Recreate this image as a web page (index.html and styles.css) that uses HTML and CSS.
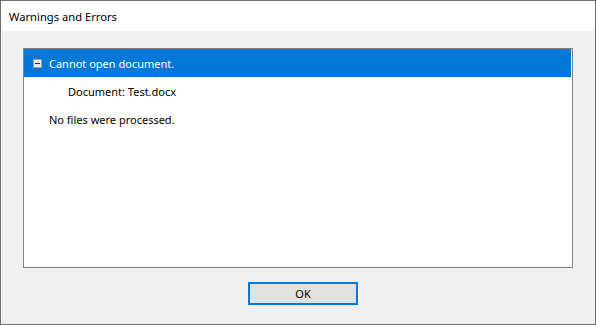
FILE: index.html
```html
<!DOCTYPE html>
<html>
<head>
<meta charset="utf-8">
<link rel="stylesheet" href="styles.css">
</head>
<body>
<div class="window">
  <div class="titlebar">Warnings and Errors</div>
  <div class="content">
    <div class="listbox">
      <div class="row selected">
        <span class="toggle"><span class="minus"></span></span>
        <span>Cannot open document.</span>
      </div>
      <div class="row child">Document: Test.docx</div>
      <div class="row plain">No files were processed.</div>
    </div>
    <div class="buttons">
      <button class="ok">OK</button>
    </div>
  </div>
</div>
</body>
</html>
```
FILE: styles.css
```css
* { box-sizing: border-box; }
html, body { margin: 0; padding: 0; background: #f0f0f0; }
body {
  font-family: "Noto Sans", "Segoe UI", sans-serif;
  font-size: 11px;
  color: #000;
}
.window {
  width: 596px;
  height: 325px;
  border: 1px solid #6e6e6e;
  background: #f0f0f0;
  display: flex;
  flex-direction: column;
}
.titlebar {
  height: 30px;
  background: #fff;
  padding-left: 8px;
  display: flex;
  align-items: center;
  color: #000;
  font-size: 11.2px;
}
.content {
  flex: 1;
  padding: 17px 22px 0 22px;
  display: flex;
  flex-direction: column;
}
.listbox {
  width: 550px;
  height: 220px;
  background: #fff;
  border: 1px solid #828282;
}
.row {
  height: 28px;
  display: flex;
  align-items: center;
}
.row.selected {
  background: #0078d7;
  color: #fff;
  padding-left: 9px;
  margin-right: 1px;
}
.toggle {
  width: 9px;
  height: 9px;
  background: #e8e8e8;
  border: 1px solid #a0a0a0;
  display: flex;
  align-items: center;
  justify-content: center;
  margin-right: 7px;
}
.minus {
  width: 5px;
  height: 1px;
  background: #333;
}
.row.child { padding-left: 44px; }
.row.plain { padding-left: 25px; }
.buttons {
  padding-top: 14px;
  padding-left: 225px;
}
.ok {
  width: 110px;
  height: 23px;
  border: 2px solid #0078d7;
  background: #e1e1e1;
  font-family: "Noto Sans", "Segoe UI", sans-serif;
  font-size: 11px;
  color: #000;
  padding: 0;
  margin: 0;
}
```
